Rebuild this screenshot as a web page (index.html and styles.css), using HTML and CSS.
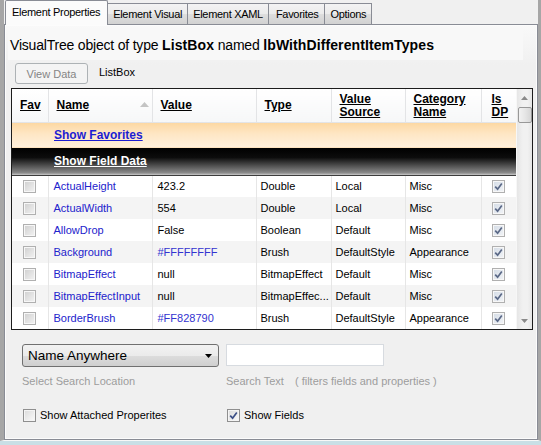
FILE: index.html
```html
<!DOCTYPE html>
<html lang="en">
<head>
    <meta charset="UTF-8">
    <meta name="viewport" content="width=device-width, initial-scale=1.0">
    <title>Element Properties</title>
    <link rel="stylesheet" href="styles.css">
</head>
<body>
    <div class="window">
        <div class="tabs">
            <div class="tab selected">Element Properties</div>
            <div class="tab">Element Visual</div>
            <div class="tab">Element XAML</div>
            <div class="tab tab-wide">Favorites</div>
            <div class="tab">Options</div>
        </div>

        <div class="page">
            <div class="title">VisualTree object of type <b>ListBox</b> named <b>lbWithDifferentItemTypes</b></div>

            <div class="toolbar">
                <button class="view-btn" disabled>View Data</button>
                <span class="type-name">ListBox</span>
            </div>

            <div class="grid">
                <div class="grid-main">
                    <table class="props">
                        <colgroup>
                            <col class="col-fav">
                            <col class="col-name">
                            <col class="col-value">
                            <col class="col-type">
                            <col class="col-source">
                            <col class="col-cat">
                            <col class="col-dp">
                        </colgroup>
                        <thead>
                            <tr>
                                <th><u>Fav</u></th>
                                <th class="sorted"><u>Name</u>
                                    <svg class="sort-arrow" width="9" height="5" viewBox="0 0 9 5"><polygon points="0,5 4.5,0 9,5" fill="#c4c4c4"/></svg>
                                </th>
                                <th><u>Value</u></th>
                                <th><u>Type</u></th>
                                <th><u>Value</u><br><u>Source</u></th>
                                <th><u>Category</u><br><u>Name</u></th>
                                <th class="th-dp"><u>Is</u><br><u>DP</u></th>
                            </tr>
                        </thead>
                        <tbody>
                            <tr class="fav-row">
                                <td></td>
                                <td colspan="6"><a href="#">Show Favorites</a></td>
                            </tr>
                            <tr class="field-row">
                                <td></td>
                                <td colspan="6"><a href="#">Show Field Data</a></td>
                            </tr>
                            <tr>
                                <td class="cell-check"><span class="cb cb-off"></span></td>
                                <td class="prop-name">ActualHeight</td>
                                <td>423.2</td>
                                <td>Double</td>
                                <td>Local</td>
                                <td>Misc</td>
                                <td class="cell-check"><span class="cb cb-on"><svg width="9" height="9" viewBox="0 0 9 9"><path d="M1.2 4.6 L3.6 7.2 L7.8 1.4" fill="none" stroke="#5b6987" stroke-width="1.7"/></svg></span></td>
                            </tr>
                            <tr>
                                <td class="cell-check"><span class="cb cb-off"></span></td>
                                <td class="prop-name">ActualWidth</td>
                                <td>554</td>
                                <td>Double</td>
                                <td>Local</td>
                                <td>Misc</td>
                                <td class="cell-check"><span class="cb cb-on"><svg width="9" height="9" viewBox="0 0 9 9"><path d="M1.2 4.6 L3.6 7.2 L7.8 1.4" fill="none" stroke="#5b6987" stroke-width="1.7"/></svg></span></td>
                            </tr>
                            <tr>
                                <td class="cell-check"><span class="cb cb-off"></span></td>
                                <td class="prop-name">AllowDrop</td>
                                <td>False</td>
                                <td>Boolean</td>
                                <td>Default</td>
                                <td>Misc</td>
                                <td class="cell-check"><span class="cb cb-on"><svg width="9" height="9" viewBox="0 0 9 9"><path d="M1.2 4.6 L3.6 7.2 L7.8 1.4" fill="none" stroke="#5b6987" stroke-width="1.7"/></svg></span></td>
                            </tr>
                            <tr>
                                <td class="cell-check"><span class="cb cb-off"></span></td>
                                <td class="prop-name">Background</td>
                                <td class="brush">#FFFFFFFF</td>
                                <td>Brush</td>
                                <td>DefaultStyle</td>
                                <td>Appearance</td>
                                <td class="cell-check"><span class="cb cb-on"><svg width="9" height="9" viewBox="0 0 9 9"><path d="M1.2 4.6 L3.6 7.2 L7.8 1.4" fill="none" stroke="#5b6987" stroke-width="1.7"/></svg></span></td>
                            </tr>
                            <tr>
                                <td class="cell-check"><span class="cb cb-off"></span></td>
                                <td class="prop-name">BitmapEffect</td>
                                <td>null</td>
                                <td>BitmapEffect</td>
                                <td>Default</td>
                                <td>Misc</td>
                                <td class="cell-check"><span class="cb cb-on"><svg width="9" height="9" viewBox="0 0 9 9"><path d="M1.2 4.6 L3.6 7.2 L7.8 1.4" fill="none" stroke="#5b6987" stroke-width="1.7"/></svg></span></td>
                            </tr>
                            <tr>
                                <td class="cell-check"><span class="cb cb-off"></span></td>
                                <td class="prop-name">BitmapEffectInput</td>
                                <td>null</td>
                                <td>BitmapEffec...</td>
                                <td>Default</td>
                                <td>Misc</td>
                                <td class="cell-check"><span class="cb cb-on"><svg width="9" height="9" viewBox="0 0 9 9"><path d="M1.2 4.6 L3.6 7.2 L7.8 1.4" fill="none" stroke="#5b6987" stroke-width="1.7"/></svg></span></td>
                            </tr>
                            <tr>
                                <td class="cell-check"><span class="cb cb-off"></span></td>
                                <td class="prop-name">BorderBrush</td>
                                <td class="brush">#FF828790</td>
                                <td>Brush</td>
                                <td>DefaultStyle</td>
                                <td>Appearance</td>
                                <td class="cell-check"><span class="cb cb-on"><svg width="9" height="9" viewBox="0 0 9 9"><path d="M1.2 4.6 L3.6 7.2 L7.8 1.4" fill="none" stroke="#5b6987" stroke-width="1.7"/></svg></span></td>
                            </tr>
                        </tbody>
                    </table>
                </div>

                <div class="scrollbar">
                    <div class="sb-btn">
                        <svg width="7" height="4" viewBox="0 0 7 4"><polygon points="0,4 3.5,0 7,4" fill="#8a8a8a"/></svg>
                    </div>
                    <div class="sb-thumb"></div>
                    <div class="sb-track"></div>
                    <div class="sb-btn">
                        <svg width="7" height="4" viewBox="0 0 7 4"><polygon points="0,0 3.5,4 7,0" fill="#8a8a8a"/></svg>
                    </div>
                </div>
            </div>

            <div class="search">
                <div class="combo">
                    <span>Name Anywhere</span>
                    <svg width="7" height="4" viewBox="0 0 7 4"><polygon points="0,0 3.5,4 7,0" fill="#000"/></svg>
                </div>
                <div class="textbox"></div>

                <div class="hint">Select Search Location</div>
                <div class="hint">Search Text <span class="hint-note">( filters fields and properties )</span></div>

                <label class="check-label"><span class="cb cb-box"></span>Show Attached Properites</label>
                <label class="check-label"><span class="cb cb-box"><svg width="9" height="9" viewBox="0 0 9 9"><path d="M1.2 4.6 L3.6 7.2 L7.8 1.4" fill="none" stroke="#3c4f86" stroke-width="1.7"/></svg></span>Show Fields</label>
            </div>
        </div>
    </div>
</body>
</html>
```

FILE: styles.css
```css
* {
    box-sizing: border-box;
}

body {
    margin: 0;
    width: 541px;
    height: 445px;
    overflow: hidden;
    background: #c9dfe6;
    font-family: 'Liberation Sans', Arial, sans-serif;
    font-size: 11px;
    color: #000;
}

.window {
    display: flex;
    flex-direction: column;
    height: 441px;
    background: #f0f0f0;
    border-left: 4px solid #a6a6a6;
    border-right: 3px solid #a6a6a6;
    border-bottom: 1px solid #f8f8f8;
}

/* tab strip */
.tabs {
    display: flex;
    align-items: flex-end;
    height: 24px;
    padding-left: 1px;
    position: relative;
    z-index: 1;
}

.tab {
    height: 21px;
    padding: 0 5px;
    margin-right: -1px;
    line-height: 20px;
    letter-spacing: -0.3px;
    border: 1px solid #898c95;
    border-bottom: none;
    background: linear-gradient(#f3f3f3 0%, #ebebeb 50%, #dedede 50%, #d2d2d2 100%);
}

.tab.tab-wide {
    padding: 0 6px 0 7px;
}

.tab.selected {
    height: 25px;
    margin-bottom: -1px;
    padding: 0 7px 0 6px;
    line-height: 23px;
    background: #fbfbfb;
    border-radius: 2px 2px 0 0;
}

.page {
    flex: 1;
    border: 1px solid #898c95;
    box-shadow: inset 0 0 0 1px #fcfcfc;
    background: linear-gradient(#f9f9f9 0px, #f0f0f0 40px);
    padding: 3px 4px 0 6px;
}

.title {
    height: 32px;
    margin: 0 10px 0 -3px;
    padding-left: 2px;
    line-height: 34px;
    font-size: 14px;
    letter-spacing: -0.2px;
    background: #f8f8f8;
}

.title b {
    letter-spacing: 0.1px;
}

.toolbar {
    display: flex;
    align-items: center;
    height: 21px;
    margin-top: 3px;
    padding-left: 4px;
}

.view-btn {
    width: 73px;
    height: 21px;
    padding: 0;
    font-family: inherit;
    font-size: 11px;
    color: #858585;
    background: #f4f4f4;
    border: 1px solid #adb2b5;
    border-radius: 3px;
}

.type-name {
    margin-left: 11px;
    margin-top: -3px;
}

/* property grid */
.grid {
    display: flex;
    height: 242px;
    margin-top: 4px;
    border: 1px solid #1c1c1c;
    background: #fff;
    overflow: hidden;
}

.grid-main {
    width: 504px;
}

.props {
    width: 504px;
    table-layout: fixed;
    border-collapse: collapse;
}

.col-fav { width: 36px; }
.col-name { width: 104px; }
.col-value { width: 104px; }
.col-type { width: 75px; }
.col-source { width: 74px; }
.col-cat { width: 76px; }
.col-dp { width: 35px; }

.props th {
    height: 33px;
    padding: 1px 0 0 8px;
    text-align: left;
    vertical-align: middle;
    font-size: 12px;
    line-height: 13px;
    font-weight: bold;
    background: linear-gradient(#ffffff, #f6f7f8);
    border-right: 1px solid #e3e4e6;
    border-bottom: 1px solid #e3e4e6;
}

.props th:last-child {
    border-right: none;
}

.props th.th-dp {
    padding-left: 10px;
}

.props th.sorted {
    position: relative;
}

.sort-arrow {
    position: absolute;
    right: 3px;
    top: 13px;
}

.props td {
    height: 22px;
    padding: 0 0 0 4px;
    white-space: nowrap;
    overflow: hidden;
    text-overflow: ellipsis;
    border-right: 1px solid #e6e6e6;
}

.props tbody tr:nth-child(even) td {
    background: #f4f4f4;
}

.props tbody tr.fav-row td {
    height: 26px;
    padding-left: 6px;
    border: none;
    background: linear-gradient(#fcd7a1 0%, #fee6c4 45%, #fff0dc 100%);
}

.props tbody tr.field-row td {
    height: 27px;
    padding-left: 6px;
    border: none;
    border-bottom: 1px solid #3c3c3c;
    background: linear-gradient(#000 0%, #0c0c0c 35%, #8a8a8a 92%, #c9c9c9 100%);
}

.fav-row a,
.field-row a {
    font-size: 12px;
    font-weight: bold;
    text-decoration: underline;
    color: #1d1dd2;
}

.field-row a {
    color: #fff;
}

.props td.prop-name {
    padding-left: 5px;
    color: #2222cc;
}

.props td.brush {
    padding-left: 5px;
    color: #3333d0;
}

.props td:nth-child(3) {
    padding-left: 5px;
}

.props td.cell-check {
    padding: 0;
    text-align: center;
}

.props td:last-child {
    border-right: none;
}

/* checkboxes */
.cb {
    display: inline-flex;
    align-items: center;
    justify-content: center;
    width: 13px;
    height: 13px;
    vertical-align: middle;
    border: 1px solid #b0b0b0;
    box-shadow: inset 0 0 0 1px #f7f7f7;
}

.cb-off {
    background: linear-gradient(135deg, #cfcfcf, #f3f3f3);
}

.cb-on {
    background: linear-gradient(135deg, #d4dce6, #f2f4f7);
}

.cb-box {
    border-color: #8f8f8f;
    background: linear-gradient(135deg, #dadada, #fbfbfb);
    box-shadow: inset 0 0 0 1px #f4f4f4;
}

/* scrollbar */
.scrollbar {
    display: flex;
    flex-direction: column;
    width: 16px;
    background: linear-gradient(90deg, #e6e6e6, #f1f1f1 40%, #f1f1f1 70%, #e6e6e6);
    border-left: 1px solid #f7f7f7;
}

.sb-btn {
    height: 17px;
    display: flex;
    align-items: center;
    justify-content: center;
}

.sb-thumb {
    height: 16px;
    margin: 1px 0 0 1px;
    border: 1px solid #989898;
    border-radius: 2px;
    background: linear-gradient(90deg, #f2f2f2, #e6e6e6 50%, #d6d6d6);
}

.sb-track {
    flex: 1;
}

/* search area */
.search {
    display: grid;
    grid-template-columns: 204px 1fr;
    grid-template-rows: 23px 13px 13px;
    row-gap: 8px;
    margin-top: 14px;
    padding-left: 11px;
}

.search .check-label {
    margin-top: 19px;
}

.combo {
    display: flex;
    align-items: center;
    justify-content: space-between;
    width: 197px;
    height: 23px;
    padding: 0 6px 0 5px;
    font-size: 13.5px;
    border: 1px solid #707070;
    border-radius: 3px;
    background: linear-gradient(#f2f2f2 0%, #ebebeb 50%, #dddddd 50%, #cfcfcf 100%);
}

.textbox {
    width: 158px;
    height: 22px;
    background: #fff;
    border: 1px solid #d7dbe0;
}

.hint {
    color: #9d9d9d;
    line-height: 13px;
}

.hint-note {
    margin-left: 8px;
}

.check-label {
    display: flex;
    align-items: center;
    line-height: 13px;
}

.check-label .cb {
    margin: 0 4px 0 1px;
}
```
